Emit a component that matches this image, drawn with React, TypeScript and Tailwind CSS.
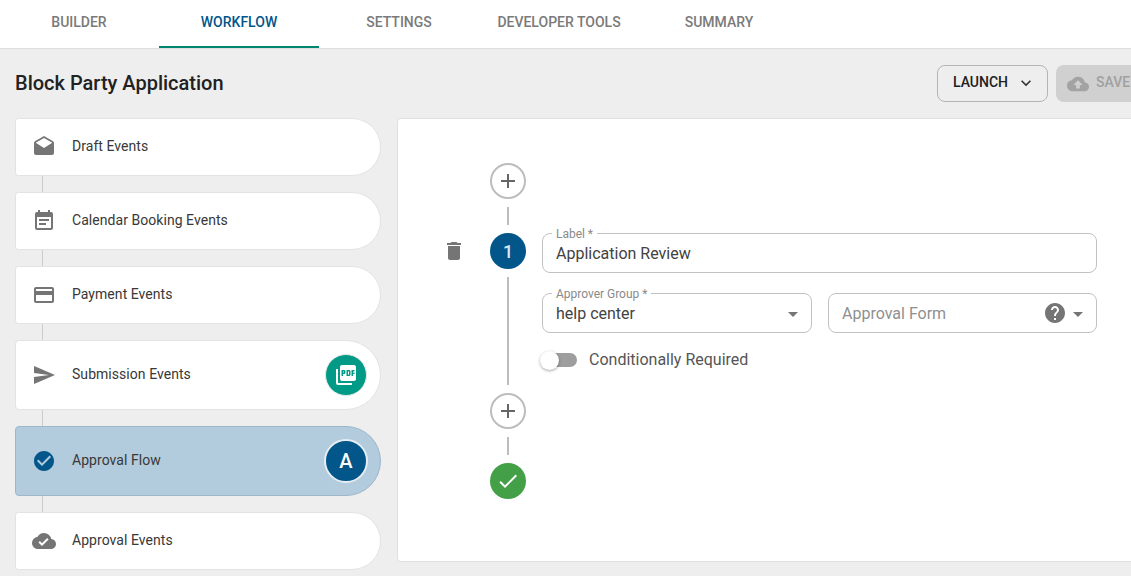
import { ReactNode } from 'react';
import {
  MdAdd,
  MdArrowDropDown,
  MdCheck,
  MdCheckCircle,
  MdCloudDone,
  MdCloudUpload,
  MdCreditCard,
  MdDelete,
  MdDrafts,
  MdEventNote,
  MdHelp,
  MdKeyboardArrowDown,
  MdPictureAsPdf,
  MdSend,
} from 'react-icons/md';

const tabs = ['BUILDER', 'WORKFLOW', 'SETTINGS', 'DEVELOPER TOOLS', 'SUMMARY'];

function SideCard({
  icon,
  label,
  badge,
  tall,
  active,
}: {
  icon: ReactNode;
  label: string;
  badge?: ReactNode;
  tall?: boolean;
  active?: boolean;
}) {
  return (
    <div
      className={`flex items-center w-[366px] pl-[16px] pr-[12px] rounded-l-[4px] rounded-r-[35px] border ${
        tall ? 'h-[70px]' : 'h-[58px]'
      } ${active ? 'bg-[#b3ccdd] border-[#9db6c8]' : 'bg-white border-[#e3e3e3]'}`}
    >
      <span className="w-[24px] h-[24px] flex items-center justify-center">{icon}</span>
      <span className="ml-[16px] pb-[2px] flex-1 text-[14px] tracking-[0.05px] text-[#383838]">{label}</span>
      {badge}
    </div>
  );
}

function Connector() {
  return <div className="w-px h-[16px] ml-[27px] bg-[#cccccc]" />;
}

function AddStep() {
  return (
    <div className="w-[36px] h-[36px] rounded-full border-2 border-[#bdbdbd] bg-white flex items-center justify-center">
      <MdAdd size={24} className="text-[#666666]" />
    </div>
  );
}

function Field({ label, className, children }: { label?: string; className: string; children: ReactNode }) {
  return (
    <div className={`relative h-[40px] flex items-center pl-[13px] pr-[6px] pt-[1px] rounded-[8px] border border-[#c2c2c2] ${className}`}>
      {label && (
        <span className="absolute left-[9px] top-[-7px] px-[4px] bg-white text-[12px] tracking-[-0.02px] leading-[14px] text-[#8a8a8a]">
          {label}
        </span>
      )}
      {children}
    </div>
  );
}

export default function App() {
  return (
    <div className="w-[1131px] h-[576px] overflow-hidden bg-[#eeeeee] font-['Roboto',sans-serif]">
      <div className="h-[49px] bg-white border-b border-[#dddddd] flex pl-0 ml-[-1px]">
        {tabs.map(tab => (
          <div
            key={tab}
            className={`w-[160px] h-[48px] flex items-center justify-center text-[14px] font-medium pb-[4px] ${
              tab === 'WORKFLOW' ? 'text-[#02568a] border-b-2 border-[#00856f] pt-[2px]' : 'text-[#7a7a7a]'
            }`}
          >
            {tab}
          </div>
        ))}
      </div>

      <div className="flex items-center h-[69px] pl-[15px]">
        <h1 className="flex-1 text-[20px] font-medium text-[#212121] pb-[1px]">Block Party Application</h1>
        <button
          type="button"
          className="w-[111px] h-[37px] flex items-center pl-[15px] gap-[8px] rounded-[8px] border border-[#b5b5b5] text-[14px] font-medium text-[#212121]"
        >
          <span className="pb-[3px]">LAUNCH</span>
          <MdKeyboardArrowDown size={20} className="text-[#333333] mt-[-1px]" />
        </button>
        <button
          type="button"
          className="ml-[8px] w-[75px] h-[37px] flex items-center pl-[11px] gap-[7px] rounded-l-[8px] bg-[#d0d0d0] text-[14px] font-medium text-[#a0a0a0] overflow-hidden shrink-0"
        >
          <MdCloudUpload size={22} className="text-[#a3a3a3] shrink-0" />
          <span className="pb-[3px]">SAVE</span>
        </button>
      </div>

      <div className="flex gap-[16px] items-start">
        <div className="w-[366px] ml-[15px] shrink-0">
          <SideCard icon={<MdDrafts size={24} className="text-[#757575]" />} label="Draft Events" />
          <Connector />
          <SideCard icon={<MdEventNote size={24} className="text-[#757575]" />} label="Calendar Booking Events" />
          <Connector />
          <SideCard icon={<MdCreditCard size={24} className="text-[#757575]" />} label="Payment Events" />
          <Connector />
          <SideCard
            tall
            icon={<MdSend size={24} className="text-[#757575]" />}
            label="Submission Events"
            badge={
              <span className="w-[42px] h-[42px] mr-[1px] rounded-full border border-[#e8e8e8] bg-[#009a86] flex items-center justify-center">
                <MdPictureAsPdf size={24} className="text-white" />
              </span>
            }
          />
          <Connector />
          <SideCard
            tall
            active
            icon={<MdCheckCircle size={24} className="text-[#02568a]" />}
            label="Approval Flow"
            badge={
              <span className="w-[44px] h-[44px] rounded-full border-2 border-[#e6edf2] bg-[#02568a] flex items-center justify-center text-[20px] font-medium text-white">
                A
              </span>
            }
          />
          <Connector />
          <SideCard icon={<MdCloudDone size={24} className="text-[#757575]" />} label="Approval Events" />
        </div>

        <div className="w-[760px] h-[444px] shrink-0 bg-white border border-[#e0e0e0] rounded-[4px] flex pt-[44px] pl-[44px]">
          <div className="w-[24px] mr-[24px] pt-[76px]">
            <MdDelete size={24} className="text-[#757575]" />
          </div>
          <div className="w-[36px] flex flex-col items-center gap-[8px]">
            <AddStep />
            <div className="w-[2px] h-[18px] bg-[#bdbdbd]" />
            <div className="w-[36px] h-[36px] rounded-full bg-[#02568a] flex items-center justify-center text-[18px] font-medium text-[#dfe8ee]">
              1
            </div>
            <div className="w-[2px] h-[108px] bg-[#bdbdbd]" />
            <AddStep />
            <div className="w-[2px] h-[18px] bg-[#bdbdbd]" />
            <div className="w-[36px] h-[36px] rounded-full bg-[#43a047] flex items-center justify-center">
              <MdCheck size={24} className="text-white" />
            </div>
          </div>
          <div className="w-[555px] ml-[16px] pt-[70px] flex flex-col gap-[20px]">
            <Field label="Label *" className="w-[555px]">
              <span className="text-[16px] text-[#424242]">Application Review</span>
            </Field>
            <div className="flex gap-[16px]">
              <Field label="Approver Group *" className="w-[270px]">
                <span className="flex-1 text-[16px] text-[#424242]">help center</span>
                <MdArrowDropDown size={24} className="text-[#757575]" />
              </Field>
              <Field className="w-[269px]">
                <span className="flex-1 text-[16px] text-[#8f8f8f]">Approval Form</span>
                <MdHelp size={24} className="text-[#757575] mt-[-1px]" />
                <MdArrowDropDown size={24} className="text-[#757575] ml-[-1px]" />
              </Field>
            </div>
            <div className="flex items-center h-[14px]">
              <div className="relative w-[36px] h-[14px] rounded-full bg-[#9e9e9e] ml-[-1px]">
                <span className="absolute left-[-1px] top-[-2px] w-[19px] h-[19px] rounded-full bg-white shadow-[0_1px_3px_rgba(0,0,0,0.35)]" />
              </div>
              <span className="ml-[12px] text-[16px] text-[#555555]">Conditionally Required</span>
            </div>
          </div>
        </div>
      </div>
    </div>
  );
}
